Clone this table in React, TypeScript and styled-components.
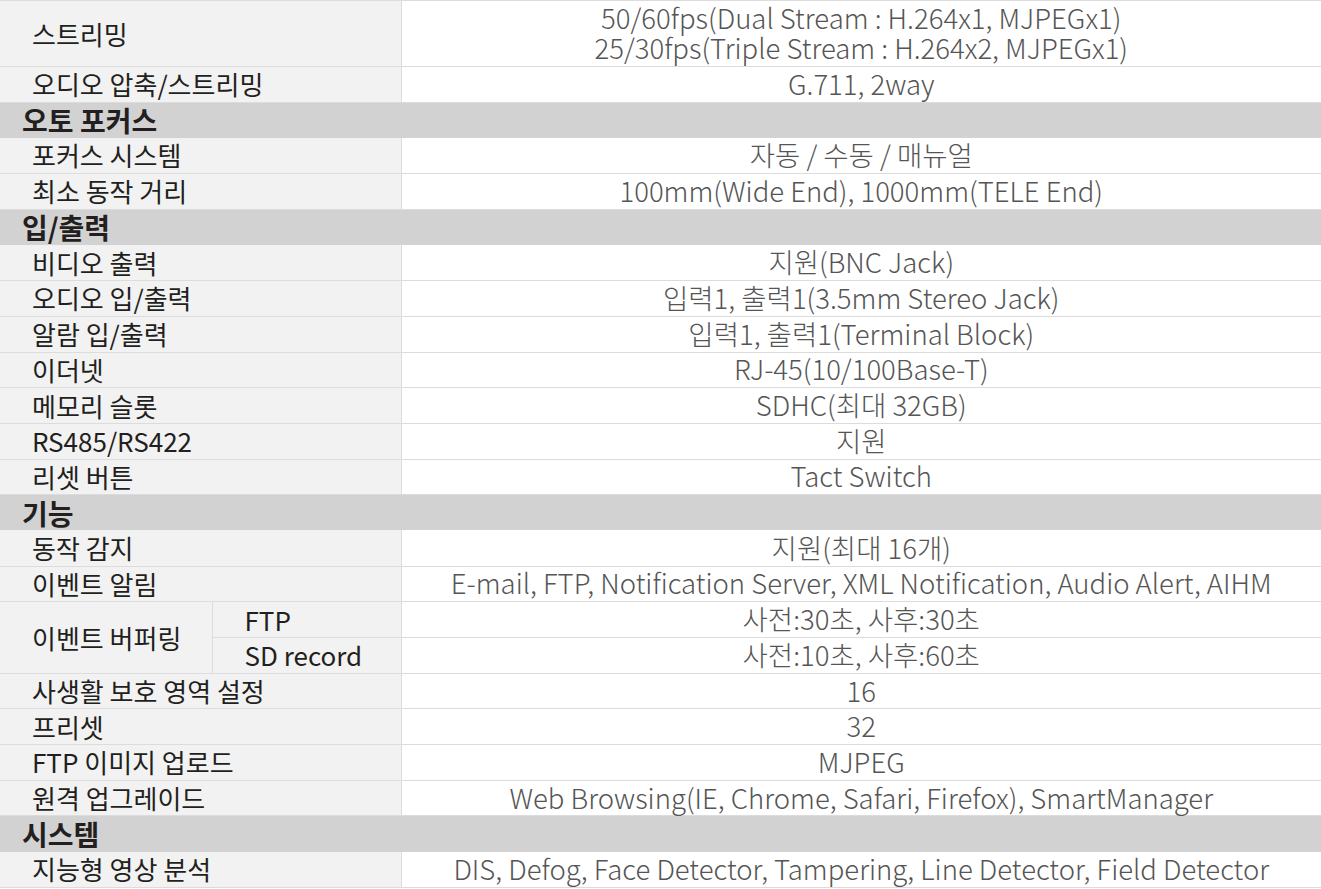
import React from 'react';
import styled, { createGlobalStyle } from 'styled-components';

const GlobalStyle = createGlobalStyle`
  html, body {
    margin: 0;
    padding: 0;
    background: #fff;
  }
`;

const Table = styled.table`
  width: 1321px;
  border-collapse: collapse;
  table-layout: fixed;
  font-family: 'Noto Sans CJK KR', 'Noto Sans', sans-serif;
  font-size: 26px;
  border-top: 1px solid #dcdcdc;
`;

const Row = styled.tr<{ $tall?: boolean }>`
  height: ${(p) => (p.$tall ? '66px' : '35.7px')};
`;

const Label = styled.td`
  background: #f2f2f2;
  color: #231f20;
  padding: 0 0 0 32px;
  border-bottom: 1px solid #dcdcdc;
  border-right: 1px solid #dcdcdc;
  white-space: nowrap;
  line-height: 30px;
`;

const SubLabel = styled(Label)`
  padding-left: 32px;
`;

const Value = styled.td`
  color: #555;
  text-align: center;
  border-bottom: 1px solid #dcdcdc;
  white-space: nowrap;
  line-height: 30px;
  padding: 0 0 3px;
  font-size: 27.5px;
  font-weight: 300;
`;

const Section = styled.td`
  background: #d2d2d2;
  color: #231f20;
  font-size: 28px;
  font-weight: 700;
  padding: 0 0 0 22px;
  line-height: 30px;
`;

type Item =
  | { kind: 'section'; title: string }
  | { kind: 'row'; label: string; value: React.ReactNode; tall?: boolean }
  | { kind: 'split'; label: string; subs: { sub: string; value: string }[] };

const items: Item[] = [
  {
    kind: 'row',
    label: '스트리밍',
    tall: true,
    value: (
      <>
        50/60fps(Dual Stream : H.264x1, MJPEGx1)
        <br />
        25/30fps(Triple Stream : H.264x2, MJPEGx1)
      </>
    ),
  },
  { kind: 'row', label: '오디오 압축/스트리밍', value: 'G.711, 2way' },
  { kind: 'section', title: '오토 포커스' },
  { kind: 'row', label: '포커스 시스템', value: '자동 / 수동 / 매뉴얼' },
  { kind: 'row', label: '최소 동작 거리', value: '100mm(Wide End), 1000mm(TELE End)' },
  { kind: 'section', title: '입/출력' },
  { kind: 'row', label: '비디오 출력', value: '지원(BNC Jack)' },
  { kind: 'row', label: '오디오 입/출력', value: '입력1, 출력1(3.5mm Stereo Jack)' },
  { kind: 'row', label: '알람 입/출력', value: '입력1, 출력1(Terminal Block)' },
  { kind: 'row', label: '이더넷', value: 'RJ-45(10/100Base-T)' },
  { kind: 'row', label: '메모리 슬롯', value: 'SDHC(최대 32GB)' },
  { kind: 'row', label: 'RS485/RS422', value: '지원' },
  { kind: 'row', label: '리셋 버튼', value: 'Tact Switch' },
  { kind: 'section', title: '기능' },
  { kind: 'row', label: '동작 감지', value: '지원(최대 16개)' },
  {
    kind: 'row',
    label: '이벤트 알림',
    value: 'E-mail, FTP, Notification Server, XML Notification, Audio Alert, AIHM',
  },
  {
    kind: 'split',
    label: '이벤트 버퍼링',
    subs: [
      { sub: 'FTP', value: '사전:30초, 사후:30초' },
      { sub: 'SD record', value: '사전:10초, 사후:60초' },
    ],
  },
  { kind: 'row', label: '사생활 보호 영역 설정', value: '16' },
  { kind: 'row', label: '프리셋', value: '32' },
  { kind: 'row', label: 'FTP 이미지 업로드', value: 'MJPEG' },
  {
    kind: 'row',
    label: '원격 업그레이드',
    value: 'Web Browsing(IE, Chrome, Safari, Firefox), SmartManager',
  },
  { kind: 'section', title: '시스템' },
  {
    kind: 'row',
    label: '지능형 영상 분석',
    value: 'DIS, Defog, Face Detector, Tampering, Line Detector, Field Detector',
  },
];

export default function App() {
  return (
    <>
      <GlobalStyle />
      <Table>
        <colgroup>
          <col style={{ width: 212 }} />
          <col style={{ width: 189 }} />
          <col />
        </colgroup>
        <tbody>
          {items.map((item, i) => {
            if (item.kind === 'section') {
              return (
                <Row key={i}>
                  <Section colSpan={3}>{item.title}</Section>
                </Row>
              );
            }
            if (item.kind === 'split') {
              return item.subs.map((s, j) => (
                <Row key={`${i}-${j}`}>
                  {j === 0 && <Label rowSpan={item.subs.length}>{item.label}</Label>}
                  <SubLabel>{s.sub}</SubLabel>
                  <Value>{s.value}</Value>
                </Row>
              ));
            }
            return (
              <Row key={i} $tall={item.tall}>
                <Label colSpan={2}>{item.label}</Label>
                <Value>{item.value}</Value>
              </Row>
            );
          })}
        </tbody>
      </Table>
    </>
  );
}
